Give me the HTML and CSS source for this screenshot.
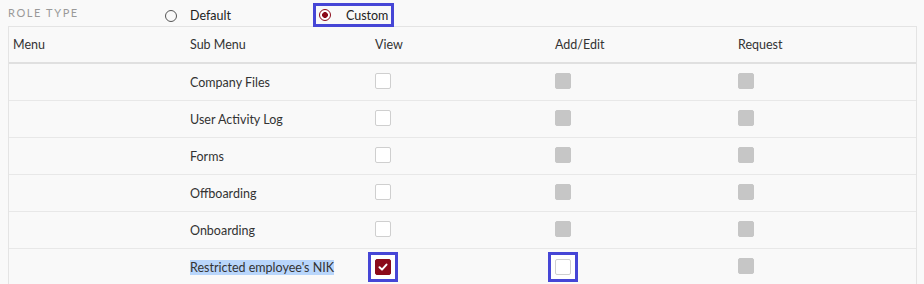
FILE: index.html
```html
<!DOCTYPE html>
<html lang="en">

<head>
    <meta charset="UTF-8" />
    <title>Role Access</title>
    <link rel="stylesheet" href="styles.css">
</head>

<body>
    <div class="role-type">
        <span class="role-label">ROLE TYPE</span>
        <label class="radio-option">
            <span class="radio"></span>
            Default
        </label>
        <label class="radio-option focus">
            <span class="radio checked"></span>
            Custom
        </label>
    </div>

    <div class="table">
        <div class="row head">
            <div class="cell">Menu</div>
            <div class="cell">Sub Menu</div>
            <div class="cell">View</div>
            <div class="cell">Add/Edit</div>
            <div class="cell">Request</div>
        </div>
        <div class="row">
            <div class="cell"></div>
            <div class="cell">Company Files</div>
            <div class="cell"><span class="box"></span></div>
            <div class="cell"><span class="box disabled"></span></div>
            <div class="cell"><span class="box disabled"></span></div>
        </div>
        <div class="row">
            <div class="cell"></div>
            <div class="cell">User Activity Log</div>
            <div class="cell"><span class="box"></span></div>
            <div class="cell"><span class="box disabled"></span></div>
            <div class="cell"><span class="box disabled"></span></div>
        </div>
        <div class="row">
            <div class="cell"></div>
            <div class="cell">Forms</div>
            <div class="cell"><span class="box"></span></div>
            <div class="cell"><span class="box disabled"></span></div>
            <div class="cell"><span class="box disabled"></span></div>
        </div>
        <div class="row">
            <div class="cell"></div>
            <div class="cell">Offboarding</div>
            <div class="cell"><span class="box"></span></div>
            <div class="cell"><span class="box disabled"></span></div>
            <div class="cell"><span class="box disabled"></span></div>
        </div>
        <div class="row">
            <div class="cell"></div>
            <div class="cell">Onboarding</div>
            <div class="cell"><span class="box"></span></div>
            <div class="cell"><span class="box disabled"></span></div>
            <div class="cell"><span class="box disabled"></span></div>
        </div>
        <div class="row">
            <div class="cell"></div>
            <div class="cell"><span class="selected">Restricted employee's NIK</span></div>
            <div class="cell">
                <span class="focus-ring">
                    <span class="box checked">
                        <svg width="12" height="12" viewBox="0 0 12 12">
                            <path d="M2.5 6.2 L5 8.6 L9.5 3.6" fill="none" stroke="#fff" stroke-width="2" stroke-linecap="round" stroke-linejoin="round" />
                        </svg>
                    </span>
                </span>
            </div>
            <div class="cell">
                <span class="focus-ring"><span class="box"></span></span>
            </div>
            <div class="cell"><span class="box disabled"></span></div>
        </div>
    </div>
</body>

</html>
```

FILE: styles.css
```css
body {
    margin: 0;
    padding: 0 8px;
    background: #f9f9f9;
    font-family: Lato, "Open Sans", sans-serif;
    font-size: 12.5px;
    color: #333;
    height: 284px;
    overflow: hidden;
}

.role-type {
    display: flex;
    align-items: center;
    height: 26px;
}

.role-label {
    width: 157px;
    font-size: 11px;
    letter-spacing: 1.6px;
    color: #999;
    margin-top: -1px;
}

.radio-option {
    display: flex;
    align-items: center;
    gap: 13px;
    color: #222;
    margin-top: 5px;
}

.radio {
    box-sizing: border-box;
    width: 12px;
    height: 12px;
    border: 1.5px solid #555;
    border-radius: 50%;
    display: inline-block;
}

.radio.checked {
    border-color: #8b0a1a;
    background: radial-gradient(circle, #8b0a1a 0 2.6px, #fff 3.2px);
}

.radio-option.focus {
    margin-left: 82px;
    margin-top: 4px;
    padding: 2px 3px;
    border: 3px solid #4646d6;
    gap: 15px;
    height: 14px;
}

.table {
    border-top: 1px solid #e4e4e4;
    border-left: 1px solid #e4e4e4;
    border-right: 1px solid #e4e4e4;
    width: 907px;
}

.row {
    display: grid;
    grid-template-columns: 177px 185px 180px 183px 182px;
    height: 36px;
    border-bottom: 1px solid #e8e8e8;
}

.row.head {
    border-bottom: 2px solid #e0e0e0;
    height: 35px;
}

.cell {
    display: flex;
    align-items: center;
    padding-left: 4px;
}

.row:not(.head) .cell:first-child {
    padding-left: 3px;
}

.box {
    box-sizing: border-box;
    width: 16px;
    height: 16px;
    border: 1px solid #cfcfcf;
    border-radius: 2px;
    background: #fff;
    display: inline-flex;
    align-items: center;
    justify-content: center;
    margin-top: -2px;
}

.box.disabled {
    background: #c6c6c6;
    border-color: #c6c6c6;
}

.box.checked {
    background: #8b0a1a;
    border-color: #8b0a1a;
}

.focus-ring {
    display: inline-flex;
    padding: 4px;
    border: 3px solid #4646d6;
    background: #fff;
    margin-left: -7px;
}

.focus-ring .box {
    margin-top: 0;
}

.selected {
    background: #b9d6fb;
}
```
